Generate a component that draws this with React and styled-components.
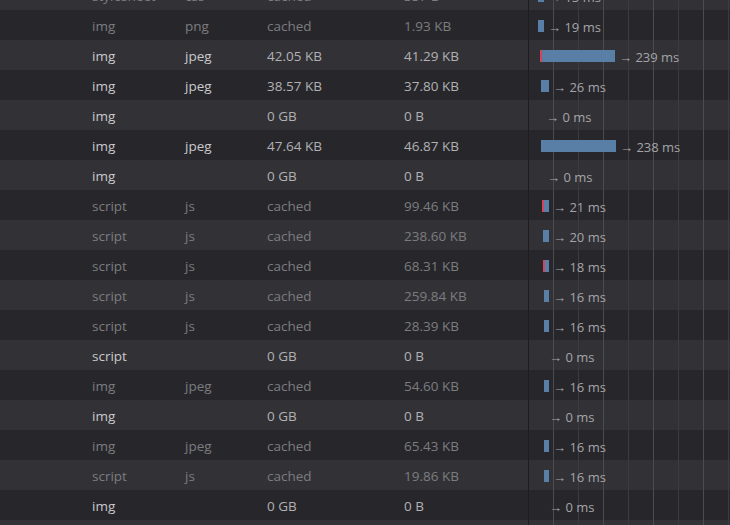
import React from "react";
import styled, { createGlobalStyle } from "styled-components";

const GlobalStyle = createGlobalStyle`
	html, body {
		margin: 0;
		padding: 0;
		background: #27272b;
	}
	body {
		font-family: "Open Sans", "Noto Sans", sans-serif;
	}
`;

const Panel = styled.div`
	width: 730px;
	height: 525px;
	overflow: hidden;
	background: #27272b;
`;

// the list is scrolled: the first row is half out of view
const List = styled.div`
	margin-top: -20px;
`;

const Row = styled.div`
	display: grid;
	grid-template-columns: 92px 93px 82px 137px 124px 202px;
	height: 30px;
	align-items: stretch;
	background: ${(p) => (p.$odd ? "#323236" : "#27272b")};
	font-size: 13.5px;
	color: ${(p) => (p.$cached ? "#7c7c80" : "#b1b1b4")};
`;

const Cell = styled.div`
	display: flex;
	align-items: center;
	white-space: nowrap;
	line-height: 30px;
	padding-top: 1px;
	color: ${(p) => (p.$bright && !p.$cached ? "#c9c9cc" : "inherit")};
`;

const Timeline = styled.div`
	display: flex;
	align-items: center;
	border-left: 1px solid #1d1d20;
	background-image: repeating-linear-gradient(
		to right,
		transparent 0 24px,
		#4b4b50 24px 25px,
		transparent 25px 49px,
		#3c3c40 49px 50px
	);
`;

const Bar = styled.div`
	height: 12px;
	background: #5a7fa7;
	flex-shrink: 0;
	border-left: ${(p) => (p.$blocked ? "2px solid #d2455b" : "none")};
	box-sizing: border-box;
`;

const Timing = styled.span`
	margin-left: 4px;
	padding-top: 2px;
	font-size: 13px;
	color: #a4a4a8;
	white-space: nowrap;
`;

const rows = [
	{ type: "stylesheet", ext: "css", transferred: "cached", size: "357 B", left: 9, width: 6, ms: 15 },
	{ type: "img", ext: "png", transferred: "cached", size: "1.93 KB", left: 9, width: 6, ms: 19 },
	{ type: "img", ext: "jpeg", transferred: "42.05 KB", size: "41.29 KB", left: 11, width: 75, ms: 239, blocked: true },
	{ type: "img", ext: "jpeg", transferred: "38.57 KB", size: "37.80 KB", left: 12, width: 8, ms: 26 },
	{ type: "img", ext: "", transferred: "0 GB", size: "0 B", left: 13, width: 0, ms: 0 },
	{ type: "img", ext: "jpeg", transferred: "47.64 KB", size: "46.87 KB", left: 12, width: 75, ms: 238 },
	{ type: "img", ext: "", transferred: "0 GB", size: "0 B", left: 14, width: 0, ms: 0 },
	{ type: "script", ext: "js", transferred: "cached", size: "99.46 KB", left: 13, width: 7, ms: 21, blocked: true },
	{ type: "script", ext: "js", transferred: "cached", size: "238.60 KB", left: 14, width: 6, ms: 20 },
	{ type: "script", ext: "js", transferred: "cached", size: "68.31 KB", left: 14, width: 6, ms: 18, blocked: true },
	{ type: "script", ext: "js", transferred: "cached", size: "259.84 KB", left: 15, width: 5, ms: 16 },
	{ type: "script", ext: "js", transferred: "cached", size: "28.39 KB", left: 15, width: 5, ms: 16 },
	{ type: "script", ext: "", transferred: "0 GB", size: "0 B", left: 16, width: 0, ms: 0 },
	{ type: "img", ext: "jpeg", transferred: "cached", size: "54.60 KB", left: 15, width: 5, ms: 16 },
	{ type: "img", ext: "", transferred: "0 GB", size: "0 B", left: 16, width: 0, ms: 0 },
	{ type: "img", ext: "jpeg", transferred: "cached", size: "65.43 KB", left: 15, width: 5, ms: 16 },
	{ type: "script", ext: "js", transferred: "cached", size: "19.86 KB", left: 15, width: 5, ms: 16 },
	{ type: "img", ext: "", transferred: "0 GB", size: "0 B", left: 16, width: 0, ms: 0 },
	{ type: "img", ext: "", transferred: "0 GB", size: "0 B", left: 16, width: 0, ms: 0 },
];

const RequestRow = ({ row, odd }) => {
	const cached = row.transferred === "cached";
	return (
		<Row $odd={odd} $cached={cached}>
			<Cell />
			<Cell $bright $cached={cached}>{row.type}</Cell>
			<Cell $bright $cached={cached}>{row.ext}</Cell>
			<Cell>{row.transferred}</Cell>
			<Cell>{row.size}</Cell>
			<Timeline>
				<Bar $blocked={row.blocked} style={{ marginLeft: row.left, width: row.width }} />
				<Timing>→ {row.ms} ms</Timing>
			</Timeline>
		</Row>
	);
};

const App = () => {
	return (
		<Panel>
			<GlobalStyle />
			<List>
				{rows.map((row, i) => (
					<RequestRow key={i} row={row} odd={i % 2 === 0} />
				))}
			</List>
		</Panel>
	);
};

export default App;
